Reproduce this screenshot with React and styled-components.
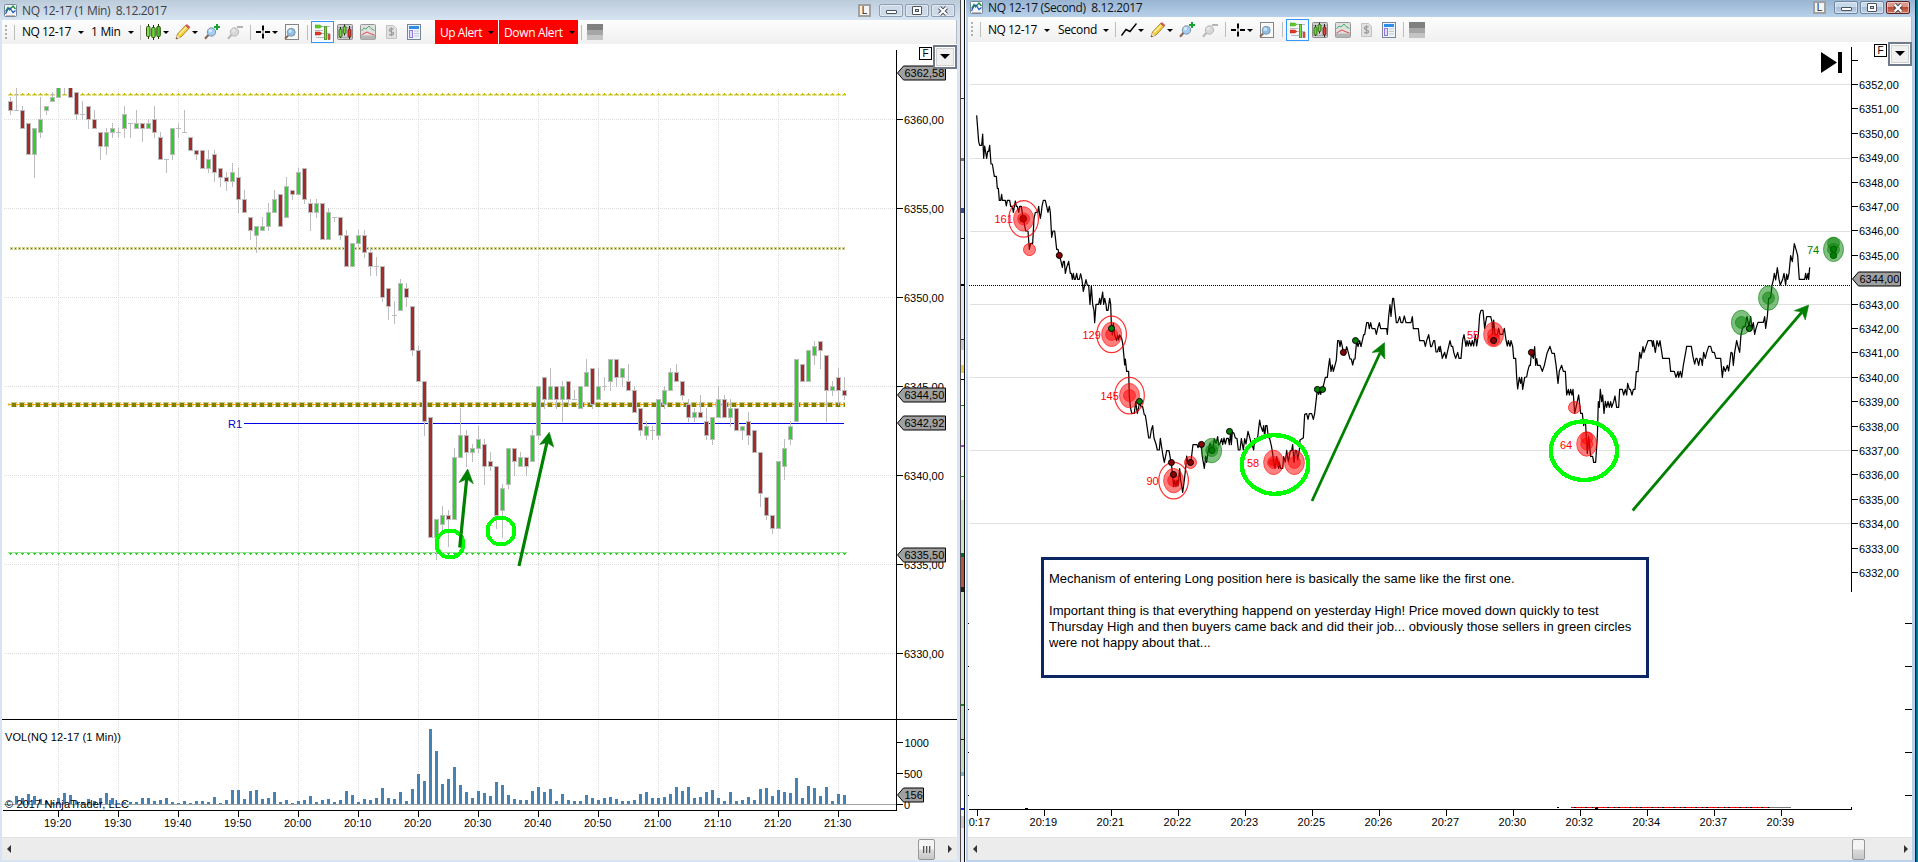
import React from "react";
import styled, { createGlobalStyle, css } from "styled-components";

const GlobalStyle = createGlobalStyle`
  body {
    margin: 0;
    overflow: hidden;
    background: #fff;
  }

  * {
    box-sizing: border-box;
  }
`;

const Desktop = styled.div`
  display: flex;
  width: 1918px;
  height: 862px;
  overflow: hidden;
  font-family: "Open Sans", "Noto Sans", sans-serif;
  font-size: 12px;
  color: #000;
`;

const Window = styled.section`
  display: flex;
  flex-direction: column;
  width: ${(p) => p.$width}px;
  height: 862px;
  border: solid ${(p) => (p.$active ? "#b9d1ea" : "#d7e4f2")};
  border-width: 0 3px 2px 2px;
  background: #fff;
`;

const TitleBar = styled.header`
  display: flex;
  align-items: center;
  flex: none;
  height: ${(p) => (p.$active ? 17 : 20)}px;
  margin: 0 -3px 0 -2px;
  padding: ${(p) => (p.$active ? "0 5px 2px 4px" : "1px 5px 0 4px")};
  background: ${(p) =>
    p.$active
      ? "linear-gradient(#98b4d2, #b9d1ea)"
      : "linear-gradient(#bccbda, #d7e4f2)"};
  color: ${(p) => (p.$active ? "#101418" : "#3c4248")};
`;

const Title = styled.h1`
  flex: 1;
  margin: 0 0 0 5px;
  font-size: 12px;
  font-weight: 400;
  line-height: 14px;
  letter-spacing: -0.37px;
  white-space: pre;
`;

const LinkBox = styled.span`
  width: 13px;
  height: 13px;
  margin-right: 8px;
  border: 2px solid #a0a0a0;
  background: #f4f4f4;
  color: #222;
  font: 10px/9px "Liberation Sans", sans-serif;
  text-align: center;
`;

const Caption = styled.button`
  display: flex;
  align-items: center;
  justify-content: center;
  width: 24px;
  height: 13px;
  margin: 0 0 0 2px;
  padding: 0;
  border: 1px solid ${(p) => (p.$close ? "#5c2020" : "#6f86a0")};
  border-radius: 2px;
  box-shadow: inset 0 0 0 1px rgba(255, 255, 255, 0.45);
  background: ${(p) =>
    p.$close
      ? "linear-gradient(#dd9a8c 45%, #bc4a36 50%, #cf7560)"
      : "linear-gradient(#c8d9ea 45%, #a9bfd8 50%, #bdd0e6)"};
  ${(p) =>
    p.$dim &&
    css`
      background: #cbd9e8;
      border-color: #8e9db0;
    `}

  &:first-of-type {
    margin-left: 0;
  }
`;

const Toolbar = styled.nav`
  display: flex;
  align-items: center;
  flex: none;
  height: ${(p) => (p.$active ? 25 : 24)}px;
  padding-left: 3px;
  background: linear-gradient(#fdfdfd, #f0f0f0);
  border-right: 1px solid #b8bcc2;
`;

const Grip = styled.i`
  width: 2px;
  height: 15px;
  background: repeating-linear-gradient(#b0b0b0 0 2px, transparent 2px 4px);
`;

const Separator = styled.i`
  width: 1px;
  height: 15px;
  margin-left: ${(p) => p.$gap}px;
  background: #bdbdbd;
`;

const MenuText = styled.span`
  flex: none;
  width: ${(p) => p.$width}px;
  margin-left: ${(p) => p.$gap}px;
  line-height: 16px;
  letter-spacing: ${(p) => p.$track || -0.5}px;
  white-space: nowrap;
`;

const Caret = styled.i`
  width: 0;
  height: 0;
  margin: 1px 0 0 ${(p) => p.$gap}px;
  border: solid transparent;
  border-width: 3px 3px 0;
  border-top-color: #000;
`;

const IconSlot = styled.span`
  display: flex;
  flex: none;
  width: 16px;
  height: 16px;
  margin-left: ${(p) => p.$gap}px;
`;

const Selected = styled.span`
  display: flex;
  align-items: center;
  justify-content: center;
  flex: none;
  width: 23px;
  height: 22px;
  margin-left: 3px;
  border: 1px solid #3399ff;
  background: #f6faff;
`;

const Alert = styled.span`
  display: flex;
  align-items: center;
  flex: none;
  width: ${(p) => p.$width}px;
  height: 24px;
  margin-left: ${(p) => p.$gap}px;
  padding-left: 5px;
  background: #ff0000;
  color: #fff;
  white-space: nowrap;
  letter-spacing: ${(p) => p.$track}px;
`;

const ChartArea = styled.main`
  position: relative;
  flex: 1;
  min-height: 0;

  > svg {
    display: block;
  }
`;

const FixedBox = styled.span`
  position: absolute;
  top: ${(p) => p.$top}px;
  right: 25px;
  width: 13px;
  height: 13px;
  border: 1px solid #000;
  background: #fff;
  font: 10px/11px "Liberation Sans", sans-serif;
  text-align: center;
`;

const PanelButton = styled.span`
  position: absolute;
  top: ${(p) => p.$top}px;
  right: 0;
  display: flex;
  align-items: center;
  justify-content: center;
  width: 24px;
  height: 24px;
  border: 2px solid #707a88;
  background: #f0f0f0;
  box-shadow: inset 0 0 0 1px #fff, inset 0 0 0 2px #d2d2d2;

  &::after {
    content: "";
    margin-top: -2px;
    border: solid transparent;
    border-width: 5px 5px 0;
    border-top-color: #000;
  }
`;

const Note = styled.aside`
  position: absolute;
  left: 73px;
  top: 515px;
  width: 608px;
  height: 121px;
  padding: 11px 5px;
  border: 3px solid #0a2663;
  background: #fff;
  font: 13px/16px "Liberation Sans", sans-serif;
  letter-spacing: 0.02px;
  white-space: pre;
`;

const ScrollBar = styled.div`
  display: flex;
  align-items: center;
  flex: none;
  height: 23px;
  border-top: 1px solid #e2e2e2;
  background: #ececec;
`;

const ScrollArrow = styled.i`
  width: 0;
  height: 0;
  margin: 0 ${(p) => (p.$right ? p.$edge : 0)}px 0
    ${(p) => (p.$right ? p.$gap : 5)}px;
  border: solid transparent;
  border-width: 4px ${(p) => (p.$right ? "0 4px 4px" : "4px 4px 0")};
  border-${(p) => (p.$right ? "left" : "right")}-color: #333;
`;

const Thumb = styled.span`
  display: flex;
  align-items: center;
  justify-content: center;
  gap: 1px;
  width: ${(p) => p.$width}px;
  height: 21px;
  margin-left: auto;
  border: 1px solid #979797;
  border-radius: 2px;
  background: linear-gradient(#f5f5f5 48%, #dadadc 52%, #c8c8cc);

  i {
    width: 2px;
    height: 7px;
    background: linear-gradient(90deg, #555 50%, #bbb 50%);
  }
`;

const Gutter = styled.div`
  display: flex;
  flex: none;
  width: 6px;
  background: #fff;
  border-left: 1px solid #4a4a4e;
`;

const GutterStrip = styled.i`
  width: 3px;
  background: linear-gradient(
    #f4f4f4 0 98px, #333 98px 99px, #f2f2f2 99px 158px, #777 158px 161px,
    #eee 161px 208px, #3a4aa0 208px 213px, #f0f0f0 213px 238px, #000 238px 239px,
    #f6f6f6 239px 284px, #000 284px 286px, #e8e8ea 286px 339px, #333 339px 340px,
    #ccc 340px 350px, #f4f4f4 350px 365px, #e6cf5c 365px 373px, #fff 373px 379px,
    #000 379px 380px, #fff 380px 405px, #178a17 405px 406px, #f6f6f6 406px 445px,
    #9a4fd0 445px 447px, #f4f6f4 447px 476px, #178a17 476px 477px, #eef5ee 477px 500px,
    #cfe2cb 500px 553px, #063 553px 557px, #b45545 557px 587px, #222 587px 592px,
    #d2e0cc 592px 704px, #178a17 704px 706px, #cbdcc6 706px 739px, #222 739px 740px,
    #cbdcc6 740px 772px, #7bbac4 772px 776px, #fff 776px 808px, #22f 808px 810px,
    #f2f2f2 810px 816px, #ccc 816px 828px, #eee 828px
  );
`;

const GutterLine = styled.i`
  width: 1px;
  background: #0b0b0b;
`;

const DesktopEdge = styled.div`
  flex: 1;
  border-left: 1px solid #063040;
  background: #0480a3;
  box-shadow: inset 1px 0 0 #046a88;
`;

/* ---------- icons ---------- */

const Svg = ({ children, w = 16, h = 16 }) => (
  <svg width={w} height={h} viewBox={`0 0 ${w} ${h}`}>
    {children}
  </svg>
);

const AppIcon = () => (
  <svg width="13" height="13" viewBox="0 0 13 13">
    <rect x="0.5" y="0.5" width="12" height="12" rx="1" fill="#f3f6fa" stroke="#76879b" />
    <path d="M1.5 7.5 4 3.5 5.5 6 9 2 11.5 5" fill="none" stroke="#15943c" strokeWidth="1.3" />
    <path d="M1.5 10 4 5 6 4 9 8.5 11.5 6.5" fill="none" stroke="#2457b8" strokeWidth="1.2" />
    <path d="M2 11.5h9" stroke="#c5b6b6" />
  </svg>
);

const CandlesIcon = () => (
  <Svg>
    <path d="M2.5 0v15M7.5 1v15M12.5 0v15" stroke="#223300" />
    <rect x="0.5" y="2.5" width="3.5" height="10" rx="1" fill="#7be04a" stroke="#2e5310" />
    <rect x="5.7" y="3.5" width="3.5" height="10" rx="1" fill="#6fd83f" stroke="#2e5310" />
    <rect x="10.8" y="2.5" width="3.5" height="10" rx="1" fill="#4fbc2c" stroke="#2e5310" />
  </Svg>
);

const LineIcon = () => (
  <Svg>
    <path d="M0.5 13.5 5 7.5 9 9.5 15.5 1.5" fill="none" stroke="#000" strokeWidth="1.4" />
  </Svg>
);

const PencilIcon = () => (
  <Svg>
    <path d="M1 15 2.5 10 10.5 1.5 14 4.5 6 13Z" fill="#f6cf3c" stroke="#9b7424" strokeWidth="0.8" />
    <path d="M4 10.5 11.5 3" stroke="#fff2a4" strokeWidth="1.2" />
    <path d="M10.5 1.5 12 0.5 15 3.2 14 4.5Z" fill="#e8545c" stroke="#a5434a" strokeWidth="0.5" />
    <path d="M1 15 2.2 11 5 13.6Z" fill="#eddcb7" />
    <path d="M1 15 1.5 13.3 2.8 14.4Z" fill="#333" />
  </Svg>
);

const ZoomIcon = ({ out }) => (
  <Svg>
    <path d="M1 14.8 4.8 10.5" stroke={out ? "#bbb" : "#8c6a5c"} strokeWidth="2.2" />
    <circle cx="7.5" cy="8" r="4.2" fill={out ? "#d7d7d7" : "#a3cdf0"} stroke={out ? "#b9b9b9" : "#7e96ab"} />
    <circle cx="6.5" cy="6.8" r="1.8" fill={out ? "#e6e6e6" : "#d4eafc"} />
    {out ? (
      <path d="M10 3h6" stroke="#b4b4b4" strokeWidth="2" />
    ) : (
      <path d="M10 3h6M13 0v6" stroke="#17a334" strokeWidth="2" />
    )}
  </Svg>
);

const CrossIcon = () => (
  <Svg w={14} h={16}>
    <path d="M7 1.5v5M7 9.5v5M0 8h5M9 8h5" stroke="#000" strokeWidth="2" />
    <rect x="6.5" y="7.5" width="1" height="1" />
  </Svg>
);

const DataBoxIcon = () => (
  <Svg>
    <rect x="1.5" y="0.5" width="13" height="15" fill="#fafafa" stroke="#858585" />
    <path d="M1 14.8 4.2 11.5" stroke="#8c6a5c" strokeWidth="2" />
    <circle cx="7.2" cy="8.3" r="4" fill="#8dbfe9" stroke="#8096a8" />
    <circle cx="6.3" cy="7.2" r="1.7" fill="#c9e4fa" />
  </Svg>
);

const TraderIcon = () => (
  <Svg>
    <path d="M0 1h5l2 1.5L5 4H0Z" fill="#5fcf27" stroke="#479b1c" strokeWidth="0.5" />
    <path d="M0 8h5l2 1.5L5 11H0Z" fill="#e8382a" stroke="#a32018" strokeWidth="0.5" />
    <path d="M7 2.5h8M0 6.5h8M7 9.5h8M1 13.5h8" stroke="#b9b9b9" />
    <rect x="9.5" y="2.5" width="2" height="13" fill="#7ddb42" stroke="#579c2a" />
    <rect x="13" y="10.5" width="2" height="5" fill="#e5564b" stroke="#9a332b" strokeWidth="0.6" />
  </Svg>
);

const BarsIcon = () => (
  <Svg>
    <rect x="0.5" y="0.5" width="15" height="15" rx="1" fill="#cfcfcf" stroke="#8b8b8b" />
    <path d="M1 3.5h14M1 13.5h14" stroke="#a8a8a8" />
    <path d="M3.5 3v11M7.5 0.5v11M12.5 2v13" stroke="#222" />
    <rect x="2" y="5" width="3" height="8" rx="1" fill="#6bd437" stroke="#244f0a" strokeWidth="0.8" />
    <rect x="6.2" y="2.5" width="2.8" height="7" rx="1" fill="#6bd437" stroke="#244f0a" strokeWidth="0.8" />
    <rect x="11" y="5" width="3" height="8" rx="1" fill="#e23d31" stroke="#5e120c" strokeWidth="0.8" />
  </Svg>
);

const IndicatorIcon = () => (
  <Svg>
    <rect x="0.5" y="0.5" width="15" height="15" rx="1" fill="#e0e0e0" stroke="#969696" />
    <rect x="1" y="11.5" width="14" height="4" fill="#b4b4b4" />
    <path d="M1.5 7 4 4 6 5 9 2 11 4.5 14.5 6.5" fill="none" stroke="#44b169" />
    <path d="M1.5 11 4 9.5 7 8 10 9.5 14.5 11" fill="none" stroke="#de4b4b" />
  </Svg>
);

const StrategyIcon = () => (
  <Svg>
    <path d="M3.5 1.5h7l3 3v10h-10Z" fill="#e1e1e1" stroke="#c2c2c2" />
    <path d="M10.6 5.3C9.4 4.2 6.4 4.2 6.4 6.2c0 2 4.2 1.2 4.2 3.3 0 2-3.1 2-4.4.7M8.5 3.2v9" fill="none" stroke="#9d9d9d" strokeWidth="1.3" />
  </Svg>
);

const PropertiesIcon = () => (
  <Svg>
    <rect x="1.5" y="0.5" width="13" height="15" fill="#eef4fc" stroke="#778594" />
    <rect x="3" y="2" width="10" height="3" fill="#2e8de6" />
    <rect x="3.5" y="6.5" width="3" height="7" fill="#e8ddff" stroke="#9277e0" />
    <path d="M8 7h5M8 9.5h5M8 12h5" stroke="#bcc6d2" />
  </Svg>
);

const GrayIcon = () => (
  <Svg>
    <path d="M0 0h16v6H0Z" fill="#808080" />
    <path d="M0 6h16v5H0Z" fill="#a6a6a6" />
    <path d="M0 11h16v5H0Z" fill="#c4c4c4" />
  </Svg>
);

const MinGlyph = () => (
  <Svg w={11} h={9}>
    <rect x="0.5" y="4.5" width="10" height="3" rx="0.5" fill="#fff" stroke="#4a525c" />
  </Svg>
);

const MaxGlyph = () => (
  <Svg w={10} h={9}>
    <rect x="0.5" y="0.5" width="9" height="8" rx="0.5" fill="#fff" stroke="#4a525c" />
    <rect x="3.5" y="3.5" width="3" height="2" fill="#c2d2e4" stroke="#4a525c" />
  </Svg>
);

const CloseGlyph = () => (
  <Svg w={12} h={10}>
    <path d="M2.5 1.5 9.5 8.5M9.5 1.5 2.5 8.5" stroke="#4c4c58" strokeWidth="4" />
    <path d="M2.5 1.5 9.5 8.5M9.5 1.5 2.5 8.5" stroke="#fff" strokeWidth="2.2" />
  </Svg>
);

/* ---------- one minute chart ---------- */

// colour, high, body top, body bottom, low (d is a doji)
const CANDLES = `
r 97 101 111 115|d 88 110 111 111|r 106 110 129 129|r 123 123 155 155|g 128 128 155 178
g 97 119 133 138|g 106 106 111 115|g 92 97 102 102|g 80 80 98 98|d 80 83 84 94
r 80 80 98 98|r 92 92 115 120|d 101 114 115 120|r 106 106 120 129|r 110 119 129 129
r 132 132 147 160|g 128 132 147 155|g 123 128 133 138|d 128 132 133 138|g 106 114 129 138
d 123 123 124 138|g 110 123 129 129|r 123 123 129 142|g 119 123 129 129|r 106 119 133 138
r 132 137 160 160|d 159 159 160 173|g 128 128 155 160|d 123 128 129 138|d 110 132 133 133
r 137 137 151 151|r 150 150 155 160|r 150 150 169 169|g 150 159 169 173|r 150 154 173 182
r 168 168 178 187|r 172 177 182 191|g 163 172 182 187|r 168 177 200 213|r 190 199 213 213
r 217 217 231 240|g 226 226 236 253|g 217 226 231 231|g 203 212 227 231|g 190 199 213 213
r 194 194 227 227|g 177 186 218 218|r 190 190 195 200|g 168 172 195 195|r 168 168 200 204
r 199 203 213 231|g 199 203 213 218|r 203 203 240 240|g 208 212 240 240|d 217 217 218 222
r 217 217 236 240|r 230 235 267 267|g 243 243 267 267|g 230 235 244 247|r 230 235 253 258
r 248 252 267 276|d 257 266 267 276|r 266 266 298 302|r 288 288 307 320|d 301 315 316 324
g 279 283 311 311|r 283 288 298 307|r 306 306 351 356|r 346 350 382 382|r 381 381 422 436
r 417 417 538 538|g 519 519 538 560|g 506 515 525 530|r 510 515 520 547|g 448 457 520 520
g 408 435 458 458|r 430 435 453 467|g 444 448 453 462|g 426 439 449 453|r 439 444 467 485
r 452 461 467 471|r 466 466 516 529|g 484 488 511 538|g 448 448 485 489|r 448 448 462 476
g 452 457 467 467|r 457 457 467 476|g 430 435 462 462|g 386 386 436 440|r 377 377 400 409
g 368 386 400 400|r 386 386 400 409|g 381 386 400 422|r 381 381 400 405|d 390 399 400 400
g 386 386 409 409|g 359 372 387 387|r 368 368 405 409|g 368 386 400 400|d 377 386 387 391
g 359 359 382 391|r 359 359 378 387|g 368 368 378 387|r 364 381 391 391|r 386 390 413 413
r 408 408 431 436|g 421 426 436 440|d 426 430 431 440|g 399 399 436 440|g 386 390 405 409
g 368 372 391 391|r 364 372 382 382|r 381 381 396 400|r 399 404 418 422|g 408 412 418 422
r 395 412 418 418|r 408 421 436 440|g 417 417 440 445|g 386 399 418 418|r 395 399 418 418
g 399 408 418 427|r 408 408 431 431|g 426 426 431 440|r 412 421 436 445|r 430 430 453 453
r 452 452 494 507|r 497 497 516 520|r 515 515 529 534|g 461 461 529 529|g 439 448 467 480
g 421 426 440 445|g 359 359 422 422|r 364 364 382 382|g 350 350 382 382|g 341 346 356 365
r 341 341 351 369|r 355 355 391 422|g 381 386 391 396|r 368 377 391 405|r 377 390 396 400
`
  .trim()
  .split(/[|\n]/)
  .map((row) => {
    const [kind, ...ys] = row.split(" ");
    return [kind, ...ys.map(Number)];
  });

const VOLUME = [
  0, 8, 6, 10, 8, 5, 3, 2, 6, 11, 9, 3, 2, 5, 3, 6, 11, 6, 1, 2, 2, 2, 6, 6, 3, 4, 6, 2, 1, 3,
  1, 3, 3, 2, 7, 1, 4, 14, 14, 5, 13, 14, 5, 6, 12, 2, 4, 1, 3, 4, 8, 2, 4, 5, 2, 4, 13, 9, 2,
  5, 4, 6, 16, 6, 5, 12, 3, 15, 30, 23, 75, 53, 20, 25, 37, 19, 12, 6, 13, 11, 8, 22, 19, 9, 5,
  4, 4, 13, 17, 12, 15, 3, 10, 4, 3, 3, 9, 6, 4, 6, 7, 5, 3, 3, 4, 10, 12, 6, 6, 7, 10, 17, 13,
  17, 6, 7, 12, 14, 6, 3, 12, 3, 4, 7, 4, 15, 16, 8, 14, 12, 11, 26, 6, 18, 16, 8, 17, 3, 10, 9,
];

const MINUTE_TIMES = [
  "19:20", "19:30", "19:40", "19:50", "20:00", "20:10", "20:20",
  "20:30", "20:40", "20:50", "21:00", "21:10", "21:20", "21:30",
];

const MINUTE_PRICES = ["6360,00", "6355,00", "6350,00", "6345,00", "6340,00", "6335,00", "6330,00"];

const candleX = (i) => 10 + i * 6;

const ChartText = styled.text`
  font-family: "Liberation Sans", sans-serif;
  font-size: 11px;
  fill: ${(p) => p.$fill || "#000"};
  text-anchor: ${(p) => p.$anchor || "start"};
`;

const PriceTag = ({ x, y, w = 48, children }) => (
  <g>
    <path
      d={`M${x} ${y} l6 -7 h${w - 6} v14 h${6 - w} Z`}
      fill="#a0a0a0"
      stroke="#000"
    />
    <ChartText x={x + 7} y={y + 4}>
      {children}
    </ChartText>
  </g>
);

const Candle = ({ kind, x, high, top, bottom, low }) => (
  <g>
    <rect x={x} y={high} width="1" height={low - high} fill="#bdbdbd" />
    <rect x={x - 2} y={top} width="5" height={bottom - top} fill="#bdbdbd" />
    {kind !== "d" && (
      <rect
        x={x - 1}
        y={top + 1}
        width="3"
        height={bottom - top - 2}
        fill={kind === "r" ? "#a52a2a" : "#32cd32"}
      />
    )}
  </g>
);

const Arrow = ({ from, to, head, width = 3.2 }) => (
  <g>
    <path d={`M${from} L${to}`} stroke="#008000" strokeWidth={width} />
    <path d={`M${head} Z`} fill="#008000" stroke="#008000" strokeWidth="0.6" />
  </g>
);

const MinuteChart = () => (
  <svg width="955" height="793" viewBox="2 44 955 793">
    <defs>
      <clipPath id="minute-plot">
        <rect x="2" y="88" width="894" height="722" />
      </clipPath>
    </defs>
    <g shapeRendering="crispEdges">
      {MINUTE_TIMES.map((t, i) => (
        <path key={t} d={`M${58.5 + i * 60} 89V804`} stroke="#dcdcdc" strokeDasharray="1 1" />
      ))}
      {MINUTE_PRICES.map((p, i) => (
        <path key={p} d={`M4 ${Math.round(119 + i * 89) + 0.5}H896`} stroke="#dcdcdc" strokeDasharray="1 1" />
      ))}
      <path d="M8 95H846" stroke="#e6e296" strokeWidth="2" strokeDasharray="5 1" />
      <path d="M9 94.5H846" stroke="#c3bf00" strokeWidth="1" strokeDasharray="3 3" />
      <path d="M10 93.5H846" stroke="#c3bf00" strokeWidth="1" strokeDasharray="1 5" />
      <path d="M10 248.5H845" stroke="#cfcf98" strokeWidth="3" strokeDasharray="3 1" />
      <path d="M11 248.5H845" stroke="#6f6f00" strokeWidth="1" strokeDasharray="1 3" />
      <path d="M9 404.5H845" stroke="#c7c78a" strokeWidth="5" strokeDasharray="6 2" strokeDashoffset="-2" />
      <path d="M8 404.5H845" stroke="#ffa500" strokeWidth="1" />
      <path d="M8 403.5H845M8 405.5H845" stroke="#eedca0" strokeDasharray="2 6" />
      <path d="M12 404.5H845" stroke="#808000" strokeWidth="4" strokeDasharray="4 4" />
      <path d="M244 423.5H844" stroke="#0000e6" />
      <path d="M8 552.5H847" stroke="#90e890" />
      <path d="M9 553.5H847" stroke="#32cd32" strokeDasharray="3 3" />
      <path d="M10 554.5H847" stroke="#32cd32" strokeDasharray="1 5" />
      <g clipPath="url(#minute-plot)">
        {CANDLES.map(([kind, high, top, bottom, low], i) => (
          <Candle key={i} x={candleX(i)} {...{ kind, high, top, bottom, low }} />
        ))}
        {VOLUME.map((h, i) => (
          <rect key={i} x={candleX(i) - 1} y={804 - h} width="3" height={h} fill="#4682b4" />
        ))}
      </g>
      <path d="M4 804.5H896" stroke="#a0a0a0" />
      <path d="M2 719.5H957M3 810.5H897M896.5 50V811" stroke="#000" />
      {MINUTE_TIMES.map((t, i) => (
        <path key={t} d={`M${58.5 + i * 60} 811v6`} stroke="#000" />
      ))}
      {MINUTE_PRICES.map((p, i) => (
        <path key={p} d={`M897 ${119.5 + i * 89}h6`} stroke="#000" />
      ))}
      <path d="M897 742.5h6M897 773.5h6M897 804.5h6" stroke="#000" />
    </g>
    <g fill="none" stroke="#00ff00" strokeWidth="4" shapeRendering="crispEdges">
      <circle cx="450" cy="544" r="13.5" />
      <circle cx="501" cy="531" r="13.5" />
    </g>
    <Arrow from="459.7 547.5" to="467 476" head="467.7 469 459 482.5 467 479 473.3 483.7" />
    <Arrow from="519 566" to="547.5 440" head="549.3 432.3 539.7 444.5 547 442.6 553.7 447" />
    <ChartText x="242" y="428" $anchor="end" $fill="#0000cd">R1</ChartText>
    {MINUTE_PRICES.map((p, i) => (
      <ChartText key={p} x="904" y={124 + i * 89}>{p}</ChartText>
    ))}
    <ChartText x="904.5" y="747">1000</ChartText>
    <ChartText x="904" y="778">500</ChartText>
    <ChartText x="904" y="809">0</ChartText>
    {MINUTE_TIMES.map((t, i) => (
      <ChartText key={t} x={57.7 + i * 60} y="827" $anchor="middle">{t}</ChartText>
    ))}
    <ChartText x="5" y="741" textLength="116">VOL(NQ 12-17 (1 Min))</ChartText>
    <ChartText x="5" y="808" textLength="124">© 2017 NinjaTrader, LLC</ChartText>
    <PriceTag x={897.5} y={73}>6362,58</PriceTag>
    <PriceTag x={897.5} y={395}>6344,50</PriceTag>
    <PriceTag x={897.5} y={423}>6342,92</PriceTag>
    <PriceTag x={897.5} y={555}>6335,50</PriceTag>
    <PriceTag x={897.5} y={795} w={26}>156</PriceTag>
  </svg>
);

/* ---------- second chart ---------- */

// points are stored at three units to the pixel
const LINE_START =
  "50,346 56,425 59,436 65,436 68,402 71,475 74,438 80,475 83,454 86,454 89,436 93,492 97,492 103,529 109,529 112,565 115,565 118,601 122,601 125,583 127,601 136,601 139,618 142,601 149,601 152,619 157,619 160,637 166,603 169,619 172,619 176,637 179,619 184,619 187,640 190,656 197,693 204,693 208,748 212,730 218,730 222,656 226,637 233,637 236,619 238,637 241,655 244,637 246,619 250,601 256,601 260,619 264,637 268,619 271,637 275,712 279,693 284,693 290,748 294,748 298,766 303,784 307,802 310,784 313,784 316,820 320,802 326,784 331,820 334,820 337,838 340,820 343,838 346,838 350,820 353,838 358,838 362,820";

const LINE_MIDDLE =
  "362,282 366,300 370,334 374,316 378,299 382,316 386,316 390,373 394,318 398,373 402,392 404,428 408,373 416,373 419,355 422,373 428,336 431,373 434,355 438,373 440,391 444,391 449,355 452,373 454,430 457,465 460,430 464,465 470,482 473,465 476,480 479,465 485,475 488,490 491,520 494,555 496,537 500,574 506,574 508,650 511,680 515,700 523,700 527,665 532,700 536,682 539,664 543,680 548,680 553,705 556,705 562,745 566,774 570,774 574,750 578,737 582,774 588,792 592,810 598,810 601,775 604,795 609,828 613,847 617,828 620,812 627,812 631,835 634,847 637,880 641,920 644,900 648,920 651,900 654,918 659,866 662,900 668,937 673,900 677,865 680,828 684,847 690,850 694,835 699,794 711,794 714,803 718,794 723,794 727,830 733,865 737,828 740,847 745,810 750,790 753,800 757,820 763,776 768,790 773,770 776,795 780,790 785,776 788,794 792,774 796,792 800,775 805,775 808,794 812,756 814,794 817,756 822,760 826,774 831,776 835,810 840,810 844,776 850,810 854,776 858,792 864,754 870,776 874,792 878,800 881,810 884,776 889,776 893,772 899,720 902,737 908,754 911,737 914,774 917,737 921,737 925,772 929,776 934,797 938,820 941,847 945,865 950,830 956,865 958,847 962,865 968,865 971,830 976,846 980,811 985,846 991,812 995,812 998,794 1002,847 1006,811 1010,812 1013,840 1018,811 1020,780 1026,776 1030,774 1034,703 1040,701 1044,718 1048,701 1055,701 1060,718 1064,700 1068,665 1072,629 1076,643 1079,630 1082,643 1087,629 1092,610 1096,592 1102,592 1105,565 1109,536 1113,574 1117,555 1120,574 1125,556 1129,540 1133,482 1137,482 1140,500 1143,482 1147,500 1150,518 1154,525 1160,500 1165,518 1170,537 1174,537 1178,555 1182,537 1185,537 1190,482 1194,500 1199,482 1203,500 1207,482 1211,464 1214,464 1220,428 1225,428 1228,446 1232,428 1236,446 1245,446 1249,463 1253,445 1258,428 1262,446 1280,446 1282,463 1286,410 1290,374 1293,409 1298,355 1301,355 1305,392 1309,428 1313,428 1319,410 1323,428 1328,428 1333,408 1338,428 1353,428 1357,410 1360,446 1375,446 1379,482 1392,482 1396,499 1400,482 1406,464 1412,500 1415,500 1421,482 1424,482 1428,516 1432,516 1437,500 1440,516";

const LINE_END =
  "118,396 121,379 127,415 134,397 138,415 144,388 150,362 154,379 158,379 162,400 167,415 173,397 177,415 183,415 188,360 192,344 195,362 198,379 201,362 205,378 208,362 213,378 217,362 221,378 226,345 230,378 235,345 239,285 243,271 249,271 254,325 260,290 272,290 276,305 278,343 281,300 285,345 292,345 296,325 300,343 308,343 313,325 318,360 322,378 325,362 330,379 333,362 338,379 341,415 347,415 350,472 353,507 358,472 362,490 365,472 368,508 374,472 380,471 383,454 388,436 391,436 394,400 400,415 404,380 407,436 410,416 413,436 420,436 427,454 433,436 441,400 450,379 456,400 463,400 468,434 470,452 474,490 478,453 485,436 490,454 496,454 500,525 505,508 508,525 512,508 516,525 519,508 524,580 528,562 536,525 542,580 547,580 551,617 556,599 559,650 562,700 566,650 572,709 578,709 581,727 587,727 592,650 595,545 598,562 601,508 605,545 608,525 612,580 616,544 620,562 624,544 628,562 632,545 635,562 641,545 645,528 650,562 656,562 659,508 667,508 671,525 676,508 680,525 683,490 688,508 691,508 696,525 700,508 705,508 709,455 714,455 719,397 723,415 729,380 732,397 738,379 744,362 755,362 758,379 760,362 766,397 771,362 776,379 780,362 788,415 808,415 812,454 823,454 828,472 834,454 836,472 841,454 845,472 850,436 857,397 860,379 874,379 879,410 884,432 888,415 891,415 896,436 900,415 904,418 907,436 911,397 916,415 920,397 926,379 932,379 937,397 943,397 948,415 962,415 967,472 971,440 976,454 982,436 986,453 993,397 997,400 1000,436 1004,397 1010,362 1014,379 1019,397 1023,344 1029,320 1035,320 1041,290 1047,320 1052,290 1056,325 1060,308 1064,343 1068,325 1074,307 1090,307 1094,290 1097,325 1102,290 1106,235 1112,233 1116,196 1120,180 1123,160 1127,180 1132,143 1137,178 1141,195 1148,178 1152,160 1157,195 1160,162 1163,178 1167,160 1172,107 1177,125 1183,71 1188,88 1193,107 1198,178 1214,178 1217,160 1220,178 1224,160 1226,178 1229,142";

const SECOND_TIMES = [
  "20:17", "20:19", "20:21", "20:22", "20:23", "20:25", "20:26",
  "20:27", "20:30", "20:32", "20:34", "20:37", "20:39",
];

const secondY = (price) => 84.5 + (6352 - price) * 24.4;
const SECOND_PRICES = Array.from({ length: 21 }, (_, i) => 6352 - i);

const Bubble = ({ x, y, color = "#ff0000", ring, inner = [0] }) => (
  <g fill={color} fillOpacity="0.5" stroke={color} strokeOpacity="0.8">
    {ring && <ellipse cx={x} cy={y} rx="14.8" ry="18.3" fill="none" strokeWidth="1.2" />}
    <ellipse cx={x} cy={y} rx="10" ry="12.2" strokeOpacity="0.6" />
    {inner.map((dy) => (
      <circle key={dy} cx={x} cy={y + dy} r="6" strokeOpacity="0.5" />
    ))}
  </g>
);

const SmallBubble = ({ x, y }) => (
  <circle cx={x} cy={y} r="6" fill="#ff0000" fillOpacity="0.5" stroke="#ff0000" strokeOpacity="0.7" />
);

const Dot = ({ x, y, green }) => (
  <circle cx={x} cy={y} r="3" fill={green ? "#008000" : "#8b0000"} stroke="#000" />
);

const RED_DOTS = [[1059.3, 255.4], [1171.4, 462.5], [1173.5, 474.5], [1190.5, 462.5], [1201.4, 444.4], [1343.4, 352.4], [1493.6, 340.5], [1531.4, 352.4]];
const GREEN_DOTS = [[1111.5, 328.5], [1139.5, 401.4], [1229.5, 431.4], [1317.4, 389.4], [1322.6, 389.4], [1355.5, 340.6], [1749.4, 328.5]];

const SecondChart = () => (
  <svg width="944" height="795" viewBox="968 42 944 795">
    <g shapeRendering="crispEdges">
      {[84.5, 158.5, 231.5, 304.5, 377.5, 450.5, 523.5].map((y) => (
        <path key={y} d={`M970 ${y}H1851`} stroke="#e0e0e0" />
      ))}
      <path d="M969 285.5H1851" stroke="#000" strokeDasharray="1 1" />
      <path d="M1851.5 47V592M1852 60.5h6M969 809.5H1852M1851.5 807v3" stroke="#000" />
      {SECOND_PRICES.filter((p) => p !== 6344).map((p) => (
        <path key={p} d={`M1852 ${Math.floor(secondY(p)) + 0.5}h6`} stroke="#000" />
      ))}
      {SECOND_TIMES.map((t, i) => (
        <path key={t} d={`M${977.5 + i * 67} 810v6`} stroke="#000" />
      ))}
      {[623.5, 666.5, 709.5, 752.5, 795.5].map((y) => (
        <path key={y} d={`M1905 ${y}h7M968 ${y}h1`} stroke="#000" />
      ))}
      <path d="M1571 807.5H1770" stroke="#000" />
      <path d="M1571 807.5H1770" stroke="#f00000" strokeDasharray="3 2 5 1" />
      <path d="M1770 807.5H1791" stroke="#777" />
      <path d="M1557 807.5h2M1595 808.5h3M1025 808.5h3" stroke="#000" />
    </g>
    <g fill="none" stroke="#000" strokeWidth="3.7" strokeLinejoin="round">
      <polyline transform="translate(960 0) scale(0.33333)" points={LINE_START} />
      <polyline transform="translate(960 180) scale(0.33333)" points={LINE_MIDDLE} />
      <polyline transform="translate(1400 220) scale(0.33333)" points={LINE_END} />
    </g>
    <Bubble x={1023.6} y={218.9} ring />
    <circle cx="1023.2" cy="218.7" r="3.4" fill="#c80000" stroke="#a00000" />
    <SmallBubble x={1029.5} y={249.6} />
    <Bubble x={1111.6} y={334.4} ring />
    <Bubble x={1129.5} y={395.6} ring />
    <Bubble x={1173.6} y={480.6} ring />
    <SmallBubble x={1190.5} y={462.4} />
    <Bubble x={1211.7} y={450.6} color="#008000" />
    <circle cx="1214" cy="445.5" r="5.5" fill="#008000" fillOpacity="0.4" />
    <circle cx="1212" cy="450.5" r="3" fill="#008000" stroke="#005000" />
    <Bubble x={1273.6} y={462.4} />
    <ellipse cx="1273.6" cy="462.4" rx="5.5" ry="4" fill="#f00000" fillOpacity="0.6" />
    <Bubble x={1294.4} y={462.4} />
    <Bubble x={1493.6} y={334.5} inner={[0, 5]} />
    <SmallBubble x={1574.5} y={407.5} />
    <Bubble x={1586.7} y={444} inner={[0, -6]} />
    <Bubble x={1741.4} y={322.5} color="#008000" />
    <Bubble x={1768.5} y={298} color="#008000" />
    <Bubble x={1833.5} y={249.4} color="#008000" inner={[-6, 0]} />
    {[249.4, 255.4].map((y) => (
      <circle key={y} cx="1833.5" cy={y} r="3.2" fill="#008000" stroke="#005a00" />
    ))}
    {RED_DOTS.map(([x, y]) => (
      <Dot key={`${x}-${y}`} x={x} y={y} />
    ))}
    {GREEN_DOTS.map(([x, y]) => (
      <Dot key={`${x}-${y}`} x={x} y={y} green />
    ))}
    <ChartText x="994.5" y="223" $fill="#ff0000">161</ChartText>
    <ChartText x="1082.5" y="339" $fill="#ff0000">129</ChartText>
    <ChartText x="1100.5" y="400" $fill="#ff0000">145</ChartText>
    <ChartText x="1146.5" y="485" $fill="#ff0000">90</ChartText>
    <ChartText x="1247" y="467" $fill="#ff0000">58</ChartText>
    <ChartText x="1467" y="339" $fill="#ff0000">55</ChartText>
    <ChartText x="1560" y="449" $fill="#ff0000">64</ChartText>
    <ChartText x="1807" y="254" $fill="#008000">74</ChartText>
    <g fill="none" stroke="#00ff00" strokeWidth="4.4" shapeRendering="crispEdges">
      <ellipse cx="1275" cy="464.5" rx="33.2" ry="29.3" />
      <ellipse cx="1584" cy="450.7" rx="33.2" ry="29.3" />
    </g>
    <Arrow from="1312 501" to="1380 353" head="1384.5 342.6 1372 352.5 1378.7 351.8 1384.8 359" width={2.8} />
    <Arrow from="1632.7 510.5" to="1802 312" head="1808.7 305 1794.3 310.7 1802 312 1805.3 320" width={2.8} />
    <path d="M1821 52V73L1837 62.5ZM1838 52h4v21h-4Z" />
    {SECOND_PRICES.filter((p) => p !== 6344).map((p) => (
      <ChartText key={p} x="1859" y={Math.floor(secondY(p)) + 5}>
        {p},00
      </ChartText>
    ))}
    <PriceTag x={1852.5} y={279}>6344,00</PriceTag>
    {SECOND_TIMES.map((t, i) => (
      <ChartText key={t} x={976.3 + i * 67} y="826" $anchor="middle">{t}</ChartText>
    ))}
  </svg>
);

/* ---------- windows ---------- */

const ChartTools = ({ line }) => (
  <>
    <IconSlot $gap={5}>{line ? <LineIcon /> : <CandlesIcon />}</IconSlot>
    <Caret $gap={1} />
    <IconSlot $gap={6}><PencilIcon /></IconSlot>
    <Caret $gap={1} />
    <IconSlot $gap={6}><ZoomIcon /></IconSlot>
    <IconSlot $gap={7}><ZoomIcon out /></IconSlot>
    <Separator $gap={7} />
    <IconSlot $gap={5}><CrossIcon /></IconSlot>
    <Caret $gap={0} />
    <IconSlot $gap={6}><DataBoxIcon /></IconSlot>
    <Separator $gap={7} />
    <Selected><TraderIcon /></Selected>
    <IconSlot $gap={3}><BarsIcon /></IconSlot>
    <IconSlot $gap={7}><IndicatorIcon /></IconSlot>
    <IconSlot $gap={7}><StrategyIcon /></IconSlot>
    <IconSlot $gap={7}><PropertiesIcon /></IconSlot>
  </>
);

const WindowHeader = ({ title, active }) => (
  <TitleBar $active={active}>
    <AppIcon />
    <Title>{title}</Title>
    <LinkBox>L</LinkBox>
    <Caption $dim={!active}><MinGlyph /></Caption>
    <Caption $dim={!active}><MaxGlyph /></Caption>
    <Caption $dim={!active} $close={active}><CloseGlyph /></Caption>
  </TitleBar>
);

const App = () => (
  <>
    <GlobalStyle />
    <Desktop>
      <Window $width={960}>
        <WindowHeader title="NQ 12-17 (1 Min)  8.12.2017" />
        <Toolbar>
          <Grip />
          <Separator $gap={7} />
          <MenuText $gap={7} $width={50}>NQ 12-17</MenuText>
          <Caret $gap={6} />
          <MenuText $gap={7} $width={31} $track={-0.3}>1 Min</MenuText>
          <Caret $gap={6} />
          <Separator $gap={6} />
          <ChartTools />
          <Alert $gap={13} $width={63} $track={-0.45}>
            Up Alert
            <Caret $gap={6} />
          </Alert>
          <Alert $gap={1} $width={79} $track={-0.35}>
            Down Alert
            <Caret $gap={6} />
          </Alert>
          <Separator $gap={3} />
          <IconSlot $gap={5}><GrayIcon /></IconSlot>
        </Toolbar>
        <ChartArea>
          <MinuteChart />
          <FixedBox $top={3}>F</FixedBox>
          <PanelButton $top={1} />
        </ChartArea>
        <ScrollBar>
          <ScrollArrow />
          <Thumb $width={17}>
            <i />
            <i />
            <i />
          </Thumb>
          <ScrollArrow $right $gap={13} $edge={5} />
        </ScrollBar>
      </Window>
      <Gutter>
        <GutterStrip />
        <GutterLine />
      </Gutter>
      <Window $width={949} $active>
        <WindowHeader title="NQ 12-17 (Second)  8.12.2017" active />
        <Toolbar $active>
          <Grip />
          <Separator $gap={7} />
          <MenuText $gap={7} $width={50}>NQ 12-17</MenuText>
          <Caret $gap={6} />
          <MenuText $gap={8} $width={39} $track={-0.35}>Second</MenuText>
          <Caret $gap={6} />
          <Separator $gap={6} />
          <ChartTools line />
          <Separator $gap={6} />
          <IconSlot $gap={5}><GrayIcon /></IconSlot>
        </Toolbar>
        <ChartArea>
          <SecondChart />
          <Note>
            {`Mechanism of entering Long position here is basically the same like the first one.

Important thing is that everything happend on yesterday High! Price moved down quickly to test
Thursday High and then buyers came back and did their job... obviously those sellers in green circles
were not happy about that...`}
          </Note>
          <FixedBox $top={2}>F</FixedBox>
          <PanelButton $top={0} />
        </ChartArea>
        <ScrollBar>
          <ScrollArrow />
          <Thumb $width={13} />
          <ScrollArrow $right $gap={39} $edge={4} />
        </ScrollBar>
      </Window>
      <DesktopEdge />
    </Desktop>
  </>
);

export default App;
